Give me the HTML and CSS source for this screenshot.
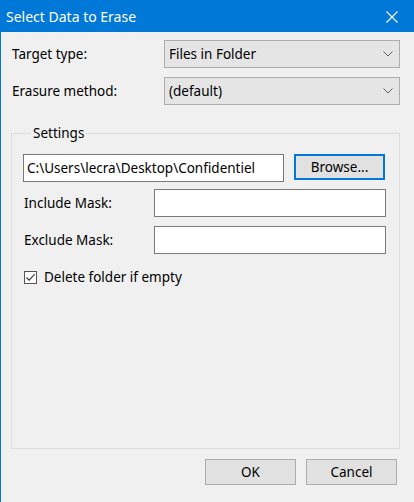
FILE: index.html
```html
<!DOCTYPE html>
<html lang="en">
<head>
    <meta charset="UTF-8">
    <title>Select Data to Erase</title>
    <link rel="stylesheet" href="styles.css">
</head>
<body>
    <div class="window">
        <div class="titlebar">
            <span class="title">Select Data to Erase</span>
            <span class="close">
                <svg width="12" height="12" viewBox="0 0 12 12">
                    <path d="M0.5 0.5 L11.5 11.5 M11.5 0.5 L0.5 11.5" stroke="#fff" stroke-width="1.1" fill="none"/>
                </svg>
            </span>
        </div>

        <div class="dialog-body">
            <div class="field-row">
                <label>Target type:</label>
                <div class="combo">
                    <span>Files in Folder</span>
                    <svg class="chevron" width="10" height="6" viewBox="0 0 10 6"><path d="M0.5 0.5 L5 5 L9.5 0.5" stroke="#606060" fill="none"/></svg>
                </div>
            </div>
            <div class="field-row second">
                <label>Erasure method:</label>
                <div class="combo">
                    <span>(default)</span>
                    <svg class="chevron" width="10" height="6" viewBox="0 0 10 6"><path d="M0.5 0.5 L5 5 L9.5 0.5" stroke="#606060" fill="none"/></svg>
                </div>
            </div>

            <fieldset class="group">
                <legend>Settings</legend>
                <div class="path-row">
                    <div class="textbox path">C:\Users\lecra\Desktop\Confidentiel</div>
                    <button class="btn default">Browse...</button>
                </div>
                <div class="mask-row include">
                    <label>Include Mask:</label>
                    <div class="textbox mask"></div>
                </div>
                <div class="mask-row exclude">
                    <label>Exclude Mask:</label>
                    <div class="textbox mask"></div>
                </div>
                <div class="check-row">
                    <span class="checkbox">
                        <svg width="11" height="11" viewBox="0 0 11 11"><path d="M1.5 5.5 L4.2 8.2 L9.7 2.2" stroke="#333" stroke-width="1.1" fill="none"/></svg>
                    </span>
                    <span>Delete folder if empty</span>
                </div>
            </fieldset>

            <div class="buttons">
                <button class="btn">OK</button>
                <button class="btn">Cancel</button>
            </div>
        </div>
    </div>
</body>
</html>
```

FILE: styles.css
```css
/* Window frame */
body {
    margin: 0;
    font-family: 'Noto Sans', 'Open Sans', sans-serif;
    font-size: 13.5px;
    color: #000;
    background: #f0f0f0;
}

.window {
    width: 413px;
    height: 502px;
    border-left: 1px solid #0078d7;
    background: #f0f0f0;
}

.titlebar {
    height: 32px;
    margin-left: -1px;
    padding: 0 16px 0 6px;
    background: #0078d7;
    color: #fff;
    display: flex;
    align-items: center;
    justify-content: space-between;
    font-size: 14px;
}

.close {
    display: flex;
    margin-top: 2px;
}

/* Dialog contents */
.dialog-body {
    padding: 8px 14px 0 10px;
}

.field-row {
    display: flex;
    align-items: center;
    justify-content: space-between;
    height: 28px;
}

.field-row.second {
    margin-top: 9px;
}

.field-row label {
    padding-left: 1px;
}

.combo {
    width: 236px;
    height: 28px;
    box-sizing: border-box;
    border: 1px solid #adadad;
    background: #e5e5e5;
    display: flex;
    align-items: center;
    justify-content: space-between;
    padding: 0 6px 0 4px;
}

/* Settings group */
.group {
    margin: 20px 0 0 0;
    padding: 0 13px 0 11px;
    border: 1px solid #dcdcdc;
    height: 324px;
    box-sizing: border-box;
}

.group legend {
    padding: 0 2px;
    margin-left: 8px;
    line-height: 16px;
}

.path-row {
    display: flex;
    align-items: flex-start;
    margin-top: 13px;
}

.textbox {
    height: 28px;
    box-sizing: border-box;
    border: 1px solid #7a7a7a;
    background: #fff;
    display: flex;
    align-items: center;
    padding-left: 3px;
    white-space: nowrap;
    overflow: hidden;
}

.textbox.path {
    width: 261px;
}

.textbox.mask {
    width: 232px;
}

.mask-row {
    display: flex;
    align-items: center;
    justify-content: space-between;
    padding-left: 1px;
}

.mask-row.include {
    margin-top: 7px;
}

.mask-row.exclude {
    margin-top: 9px;
}

.check-row {
    display: flex;
    align-items: center;
    gap: 7px;
    margin-top: 14px;
    padding-left: 1px;
}

.checkbox {
    width: 13px;
    height: 13px;
    box-sizing: border-box;
    border: 1px solid #555;
    background: #fff;
    display: flex;
    align-items: center;
    justify-content: center;
}

/* Buttons */
.btn {
    width: 91px;
    height: 26px;
    font-family: inherit;
    font-size: 13.5px;
    color: #000;
    background: #e1e1e1;
    border: 1px solid #adadad;
    padding: 0;
}

.btn.default {
    margin-left: 10px;
    border: 2px solid #0078d7;
}

.buttons {
    display: flex;
    justify-content: flex-end;
    gap: 10px;
    margin-top: 10px;
    padding-right: 3px;
}
```
